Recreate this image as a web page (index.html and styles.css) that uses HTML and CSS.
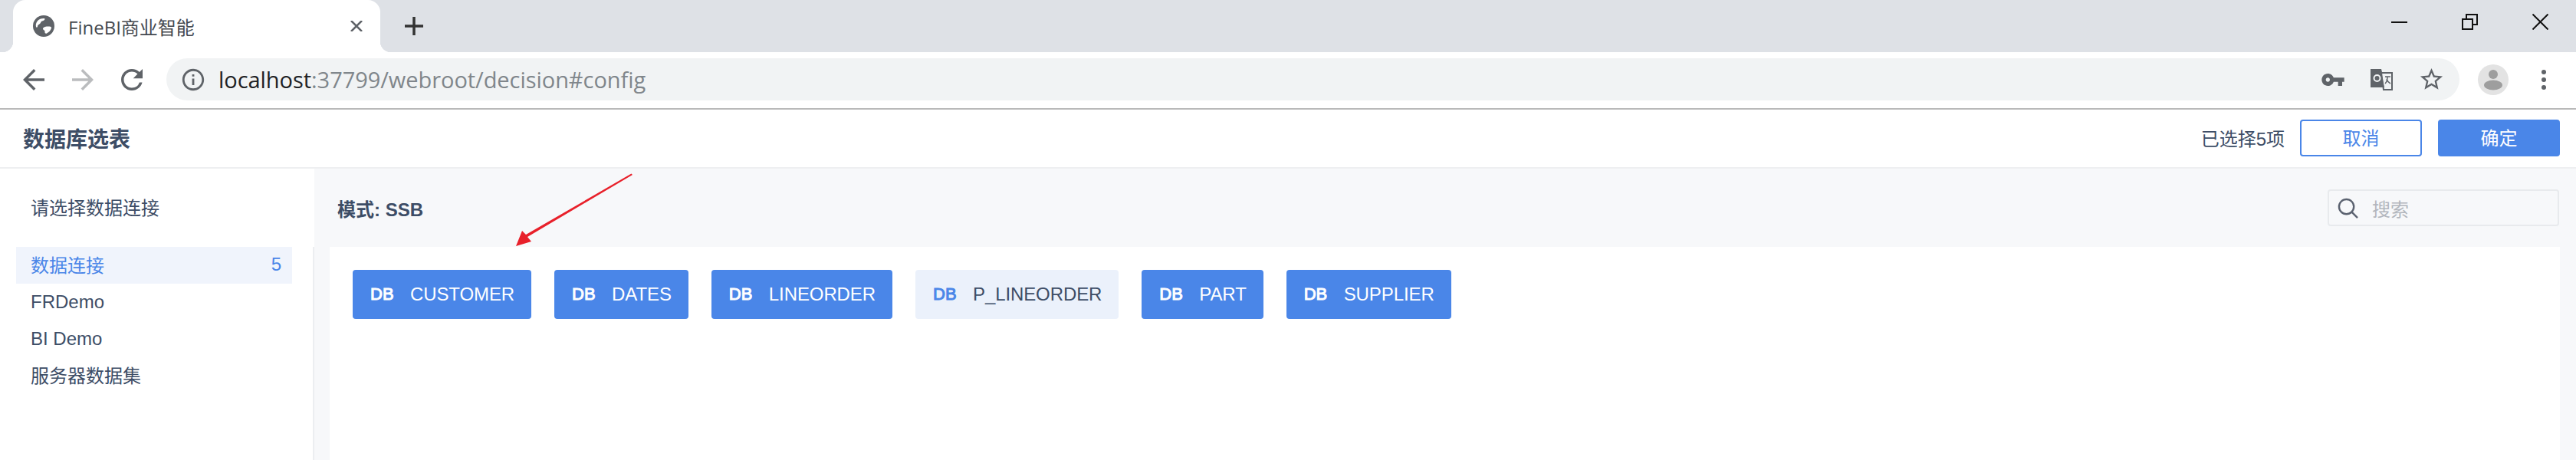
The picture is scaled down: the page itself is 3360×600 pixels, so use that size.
FILE: index.html
```html
<!DOCTYPE html>
<html lang="zh-CN">
<head>
<meta charset="utf-8">
<title>FineBI商业智能</title>
<link rel="stylesheet" href="styles.css">
</head>
<body>
<div class="tabstrip">
  <div class="tab">
    <svg class="ic-globe" viewBox="0 0 28 28"><circle cx="14" cy="14" r="14" fill="#5f6368"/><path fill="#fff" d="M4 15c-1-5 2-9 6-10.500 2-.6 5-1 5.500 0 .5 1-1.500 2.500-3.500 3-2 .5-1.500 2.500-3 3.500-1.500 1-3 1.500-3 3.500 0 1-1.500 2-2 .5zM13 17c1-2 4-2.500 7-2.500 2 0 4 0 4 1.500 0 2.500-3 6-6 7.500-1.500.7-3-.5-2.500-2.500.3-1.500-3-2-2.500-4z"/></svg>
    <span class="tab-title">FineBI商业智能</span>
    <svg class="ic-tabclose" viewBox="0 0 18 14"><path d="M2 0l14 14M16 0L2 14" stroke="#5f6368" stroke-width="2.500" fill="none"/></svg>
  </div>
  <svg class="ic-plus" viewBox="0 0 24 24"><path d="M12 0v24M0 12h24" stroke="#333" stroke-width="3.500" fill="none"/></svg>
  <div class="winctl">
    <svg class="ic-win" viewBox="0 0 21 21"><path d="M0 11h21" stroke="#111" stroke-width="2" fill="none"/></svg>
    <svg class="ic-win" viewBox="0 0 21 21"><path d="M1 7h13v13H1zM6 7V1h14v13h-6" stroke="#111" stroke-width="2" fill="none"/></svg>
    <svg class="ic-win" viewBox="0 0 21 21"><path d="M.5.500l20 20M20.500.500l-20 20" stroke="#111" stroke-width="2" fill="none"/></svg>
  </div>
</div>

<div class="toolbar">
  <svg class="ic-nav" viewBox="0 0 24 24"><path fill="#5f6368" d="M20 11H7.830l5.590-5.590L12 4l-8 8 8 8 1.410-1.410L7.830 13H20v-2z"/></svg>
  <svg class="ic-nav" viewBox="0 0 24 24"><path fill="#babcbe" d="M4 11h12.170l-5.590-5.590L12 4l8 8-8 8-1.410-1.410L16.170 13H4v-2z"/></svg>
  <svg class="ic-nav" viewBox="0 0 24 24"><path fill="#5f6368" d="M17.650 6.350A7.958 7.958 0 0 0 12 4c-4.420 0-7.990 3.580-7.990 8s3.570 8 7.990 8c3.730 0 6.840-2.550 7.730-6h-2.080A5.990 5.990 0 0 1 12 18c-3.310 0-6-2.690-6-6s2.690-6 6-6c1.660 0 3.140.69 4.220 1.780L13 11h7V4l-2.350 2.350z"/></svg>
  <div class="omnibox">
    <svg class="ic-info" viewBox="0 0 24 24"><path fill="#5f6368" d="M11 7h2v2h-2zm0 4h2v6h-2zm1-9C6.480 2 2 6.480 2 12s4.480 10 10 10 10-4.480 10-10S17.520 2 12 2zm0 18c-4.410 0-8-3.590-8-8s3.590-8 8-8 8 3.590 8 8-3.590 8-8 8z"/></svg>
    <span class="url"><span class="url-host">localhost</span>:37799/webroot/decision#config</span>
    <div class="omni-actions">
      <svg class="ic-key" viewBox="0 0 24 24"><path fill="#5f6368" d="M12.650 10C11.830 7.670 9.610 6 7 6c-3.310 0-6 2.690-6 6s2.690 6 6 6c2.610 0 4.830-1.670 5.650-4H17v4h4v-4h2v-4H12.650zM7 14c-1.100 0-2-.9-2-2s.9-2 2-2 2 .9 2 2-.9 2-2 2z"/></svg>
      <svg class="ic-trans" viewBox="0 0 29 28"><path fill="#5f6368" d="M0 0h14l1 4h-1l4 20H0z"/><path fill="none" stroke="#5f6368" stroke-width="2" d="M14 5h14v22H17z"/><circle cx="8.500" cy="12" r="4" fill="none" stroke="#f1f3f4" stroke-width="2"/><path d="M19 10h7M22 10c0 5-1 7-3 9M21 13c1 3 3 5 5 6" fill="none" stroke="#5f6368" stroke-width="1.500"/></svg>
      <svg class="ic-star" viewBox="0 0 24 24"><path fill="#5f6368" d="M22 9.240l-7.190-.62L12 2 9.190 8.630 2 9.240l5.460 4.730L5.820 21 12 17.270 18.180 21l-1.630-7.030L22 9.240zM12 15.400l-3.760 2.270 1-4.280-3.320-2.880 4.380-.38L12 6.100l1.710 4.040 4.380.38-3.320 2.880 1 4.280L12 15.400z"/></svg>
    </div>
  </div>
  <svg class="ic-avatar" viewBox="0 0 40 40"><circle cx="20" cy="20" r="20" fill="#e3e3e3"/><circle cx="20" cy="13" r="6" fill="#9e9e9e"/><ellipse cx="20" cy="27" rx="12" ry="6.500" fill="#9e9e9e"/></svg>
  <svg class="ic-dots" viewBox="0 0 6 26"><circle cx="3" cy="3" r="3" fill="#5f6368"/><circle cx="3" cy="13" r="3" fill="#5f6368"/><circle cx="3" cy="23" r="3" fill="#5f6368"/></svg>
</div>

<header class="pagehead">
  <h1 class="pagetitle">数据库选表</h1>
  <span class="count">已选择5项</span>
  <button class="btn btn-ghost">取消</button>
  <button class="btn btn-primary">确定</button>
</header>

<div class="body">
  <aside class="sidebar">
    <div class="side-title">请选择数据连接</div>
    <ul class="side-list">
      <li class="side-item side-item-cjk side-item-on"><span>数据连接</span><span>5</span></li>
      <li class="side-item">FRDemo</li>
      <li class="side-item">BI Demo</li>
      <li class="side-item side-item-cjk">服务器数据集</li>
    </ul>
  </aside>
  <main class="main">
    <div class="mainhead">
      <span class="schema">模式: SSB</span>
      <div class="search">
        <svg class="ic-search" viewBox="0 0 28 28"><circle cx="12" cy="12" r="10" fill="none" stroke="#5b6270" stroke-width="2.500"/><path d="M19 19l8 8" stroke="#5b6270" stroke-width="2.500"/></svg>
        <span>搜索</span>
      </div>
    </div>
    <section class="card">
      <div class="chip"><span class="chip-db">DB</span>CUSTOMER</div>
      <div class="chip"><span class="chip-db">DB</span>DATES</div>
      <div class="chip"><span class="chip-db">DB</span>LINEORDER</div>
      <div class="chip chip-off"><span class="chip-db">DB</span>P_LINEORDER</div>
      <div class="chip"><span class="chip-db">DB</span>PART</div>
      <div class="chip"><span class="chip-db">DB</span>SUPPLIER</div>
    </section>
  </main>
</div>

<svg class="annot" viewBox="0 0 3360 600"><path fill="#e8202a" d="M823.500 226.500L825 228L688 309L693 315L673 321L681 301L686 306z"/></svg>
</body>
</html>
```

FILE: styles.css
```css
* { box-sizing: border-box; }
html, body { margin: 0; padding: 0; }
body {
  width: 3360px;
  height: 600px;
  overflow: hidden;
  position: relative;
  display: flex;
  flex-direction: column;
  background: #fff;
  color: #3d4d66;
  font-family: "Liberation Sans", "Noto Sans CJK SC", sans-serif;
  font-size: 24px;
}
svg { display: block; flex: none; }

/* browser chrome */
.tabstrip {
  height: 68px;
  flex: none;
  display: flex;
  align-items: center;
  background: #dee1e6;
}
.tab {
  position: relative;
  width: 479px;
  height: 68px;
  margin-left: 17px;
  padding: 0 22px 0 26px;
  display: flex;
  align-items: center;
  background: #fff;
  border-radius: 16px 16px 0 0;
}
.tab::before, .tab::after {
  content: "";
  position: absolute;
  bottom: 0;
  width: 14px;
  height: 14px;
}
.tab::before { left: -14px; background: radial-gradient(circle at 0 0, transparent 14px, #fff 14.5px); }
.tab::after { right: -14px; background: radial-gradient(circle at 100% 0, transparent 14px, #fff 14.5px); }
.ic-globe { width: 28px; height: 28px; margin-right: 18px; }
.tab-title {
  font-family: "Open Sans", "Noto Sans CJK SC", sans-serif;
  font-size: 24px;
  color: #45494f;
}
.ic-tabclose { width: 18px; height: 14px; margin-left: auto; }
.ic-plus { width: 24px; height: 24px; margin-left: 32px; }
.winctl {
  margin-left: auto;
  padding-right: 36px;
  align-self: flex-start;
  padding-top: 18px;
  display: flex;
  gap: 71px;
}
.ic-win { width: 21px; height: 21px; }

.toolbar {
  height: 75px;
  flex: none;
  display: flex;
  align-items: center;
  padding: 0 0 2px 23px;
  gap: 22px;
  background: #fff;
  border-bottom: 2px solid #b9b9b9;
}
.ic-nav { width: 42px; height: 42px; }
.omnibox {
  width: 2991px;
  height: 55px;
  margin-left: 2px;
  padding: 0 19px 0 18px;
  display: flex;
  align-items: center;
  background: #f1f3f4;
  border-radius: 28px;
}
.ic-info { width: 34px; height: 34px; margin-right: 16px; }
.url {
  font-family: "Open Sans", sans-serif;
  font-size: 29px;
  letter-spacing: -0.05px;
  color: #80868b;
  white-space: nowrap;
}
.url-host { color: #202124; }
.omni-actions { margin-left: auto; display: flex; align-items: center; gap: 33px; }
.ic-key { width: 32px; height: 32px; }
.ic-trans { width: 29px; height: 28px; }
.ic-star { width: 35px; height: 35px; }
.ic-avatar { width: 40px; height: 40px; margin-left: 2px; }
.ic-dots { width: 6px; height: 26px; margin-left: 21px; }

/* page header */
.pagehead {
  height: 77px;
  flex: none;
  display: flex;
  align-items: center;
  padding: 0 21px 2px 30px;
  background: #fff;
  border-bottom: 2px solid #eeeff1;
}
.pagetitle {
  margin: 0 auto 0 0;
  font-size: 28px;
  font-weight: 700;
  color: #3d4d66;
}
.count { margin-right: 20px; }
.btn {
  width: 159px;
  height: 48px;
  padding: 0 0 3px;
  border-radius: 4px;
  font: inherit;
}
.btn-ghost { background: #fff; border: 2px solid #4a86e8; color: #4a86e8; margin-right: 21px; }
.btn-primary { background: #4a86e8; border: 2px solid #4a86e8; color: #fff; }

/* body */
.body { flex: 1; display: flex; min-height: 0; }
.sidebar { width: 410px; flex: none; background: #fff; display: flex; flex-direction: column; }
.side-title { height: 102px; padding: 0 0 3px 40px; display: flex; align-items: center; }
.side-list {
  flex: 1;
  margin: 0;
  padding: 0 27px 0 21px;
  list-style: none;
  border-right: 2px solid #eceef1;
}
.side-item {
  height: 48px;
  padding: 0 14px 0 19px;
  display: flex;
  align-items: center;
  justify-content: space-between;
}
.side-item-cjk { padding-bottom: 3px; }
.side-item-on { background: #f0f4fc; color: #4a86e8; }

.main {
  flex: 1;
  display: flex;
  flex-direction: column;
  padding: 0 21px 0 20px;
  background: #f7f8fa;
}
.mainhead {
  height: 102px;
  flex: none;
  display: flex;
  align-items: center;
  justify-content: space-between;
  padding-left: 10px;
}
.schema { font-weight: 700; }
.search {
  width: 302px;
  height: 48px;
  margin-right: 1px;
  padding: 0 11px;
  display: flex;
  align-items: center;
  gap: 18px;
  border: 2px solid #e8eaed;
  border-radius: 4px;
  color: #b2b6bd;
}
.ic-search { width: 27px; height: 27px; }

.card {
  flex: 1;
  padding: 30px;
  display: flex;
  align-items: flex-start;
  gap: 30px;
  background: #fff;
}
.chip {
  height: 64px;
  padding: 0 22px 0 23px;
  display: flex;
  align-items: center;
  gap: 22px;
  background: #4a86e8;
  color: #fff;
  border-radius: 4px;
  white-space: nowrap;
  letter-spacing: -0.1px;
}
.chip-off { background: #ebf1fb; color: #3d4d66; }
.chip-db {
  width: 30px;
  font-size: 22px;
  font-weight: 400;
  line-height: 1;
  letter-spacing: 0;
  -webkit-text-stroke: 1px currentColor;
}
.chip-off .chip-db { color: #4a86e8; }

.annot {
  position: absolute;
  left: 0;
  top: 0;
  width: 3360px;
  height: 600px;
  pointer-events: none;
}
```
